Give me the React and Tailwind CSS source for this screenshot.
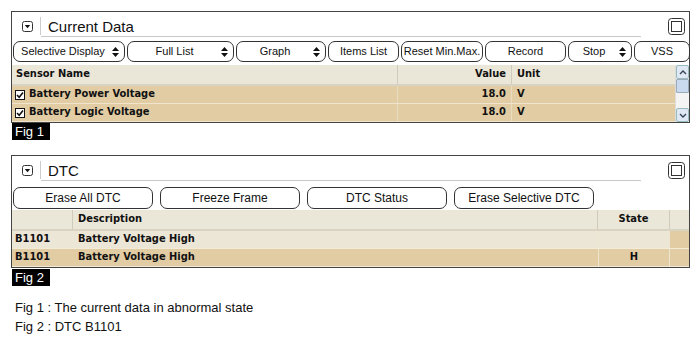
import React from 'react';

// Small widget icons drawn inline
const DropIcon = () => (
  <svg width="11" height="11" viewBox="0 0 11 11" className="shrink-0">
    <rect x="0.5" y="0.5" width="10" height="10" rx="2" fill="white" stroke="#333" />
    <path d="M2.8 4 L8.2 4 L5.5 7.2 Z" fill="#111" />
  </svg>
);

const RestoreIcon = () => (
  <svg width="17" height="17" viewBox="0 0 17 17">
    <rect x="0.5" y="0.5" width="16" height="16" rx="3" fill="white" stroke="#333" />
    <rect x="3.5" y="3.5" width="10" height="10" fill="white" stroke="#333" />
  </svg>
);

const Updown = () => (
  <svg width="7" height="10" viewBox="0 0 7 10" className="shrink-0">
    <path d="M3.5 0 L7 4 L0 4 Z M3.5 10 L7 6 L0 6 Z" fill="#111" />
  </svg>
);

const CheckBox = () => (
  <svg width="10" height="10" viewBox="0 0 10 10" className="shrink-0">
    <rect x="0.5" y="0.5" width="9" height="9" fill="white" stroke="#111" />
    <path d="M2 5 L4.2 7.2 L8 2.6" fill="none" stroke="#111" strokeWidth="1.6" />
  </svg>
);

const Btn = ({ label, w, h = 'h-[21px]', size = 'text-[11px]', arrow }) => (
  <div
    className={`${h} ${w} ${size} shrink-0 rounded-[7px] border border-[#333] bg-white flex items-center text-[#111]`}
  >
    <span className="flex-1 text-center">{label}</span>
    {arrow && <span className="mr-[5px] flex"><Updown /></span>}
  </div>
);

const PanelTitle = ({ title }) => (
  <div className="relative h-[28px] flex items-center">
    <div className="pl-[10px] pr-[7px] flex items-center h-full">
      <DropIcon />
    </div>
    <div className="w-px h-[18px] bg-[#ccc]" />
    <div className="pl-[7px] text-[15px] text-[#111] leading-none">{title}</div>
    <div className="absolute left-[29px] w-[600px] top-[24px] h-px bg-[#c8c8c8]" />
    <div className="ml-auto mr-[4px] flex items-center">
      <RestoreIcon />
    </div>
  </div>
);

const FigLabel = ({ text }) => (
  <div className="ml-[12px] w-[38px] h-[17px] bg-black text-white text-[13px] leading-none flex items-center pl-[3px]">
    {text}
  </div>
);

const ScrollBar = () => (
  <div className="w-[14px] border-l border-[#ddd] bg-[#f4f4f4] flex flex-col">
    <div className="h-[14px] bg-[#dfe8f5] border border-[#9bb] rounded-[2px] flex items-center justify-center">
      <svg width="8" height="5" viewBox="0 0 8 5"><path d="M1 4 L4 1 L7 4" fill="none" stroke="#345" strokeWidth="1.4" /></svg>
    </div>
    <div className="h-[14px] bg-[#c9d9ee] border border-[#9ab] rounded-[1px]" />
    <div className="flex-1" />
    <div className="h-[14px] bg-[#dfe8f5] border border-[#9bb] rounded-[2px] flex items-center justify-center">
      <svg width="8" height="5" viewBox="0 0 8 5"><path d="M1 1 L4 4 L7 1" fill="none" stroke="#345" strokeWidth="1.4" /></svg>
    </div>
  </div>
);

const sensors = [
  { name: 'Battery Power Voltage', value: '18.0', unit: 'V' },
  { name: 'Battery Logic Voltage', value: '18.0', unit: 'V' },
];

const dtcs = [
  { code: 'B1101', desc: 'Battery Voltage High', state: '', light: true },
  { code: 'B1101', desc: 'Battery Voltage High', state: 'H', light: false },
];

export default function App() {
  const bold = 'font-bold text-[11px] text-[#111]';
  return (
    <div className="w-[700px] h-[340px] bg-white pt-[11px] font-['Liberation_Sans',Arial,sans-serif]">
      {/* Fig 1 - current data */}
      <div className="ml-[11px] w-[679px] border border-[#444]">
        <PanelTitle title="Current Data" />
        <div className="flex gap-[2px] pl-[1px] pt-[1px]">
          <Btn label="Selective Display" w="w-[112px]" arrow />
          <Btn label="Full List" w="w-[107px]" arrow />
          <Btn label="Graph" w="w-[90px]" arrow />
          <Btn label="Items List" w="w-[71px]" />
          <Btn label="Reset Min.Max." w="w-[82px]" />
          <Btn label="Record" w="w-[81px]" />
          <Btn label="Stop" w="w-[64px]" arrow />
          <Btn label="VSS" w="w-[56px]" />
        </div>
        <div className="flex mt-[3px] font-['DejaVu_Sans_Condensed','DejaVu_Sans',sans-serif]">
          <div className="flex-1">
            <div className="flex h-[21px] bg-[#ebe7d8] border-b-2 border-[#d8d3c2] items-center">
              <div className={`w-[386px] pl-[4px] ${bold} border-r border-[#cfcab9] h-full flex items-center`}>Sensor Name</div>
              <div className={`w-[114px] pr-[5px] ${bold} border-r border-[#cfcab9] h-full flex items-center justify-end`}>Value</div>
              <div className={`pl-[5px] ${bold}`}>Unit</div>
            </div>
            {sensors.map((s, i) => (
              <div key={i} className="flex h-[18px] bg-[#e2cca4] border-b border-[#f0e4cc] items-center">
                <div className={`w-[386px] pl-[3px] flex items-center gap-[4px] ${bold} border-r border-[#eadcc0] h-full`}>
                  <CheckBox />
                  {s.name}
                </div>
                <div className={`w-[114px] pr-[5px] ${bold} border-r border-[#eadcc0] h-full flex items-center justify-end`}>{s.value}</div>
                <div className={`pl-[5px] ${bold}`}>{s.unit}</div>
              </div>
            ))}
          </div>
          <ScrollBar />
        </div>
      </div>
      <FigLabel text="Fig 1" />

      {/* Fig 2 - DTC */}
      <div className="ml-[11px] mt-[15px] w-[679px] border border-[#444]">
        <PanelTitle title="DTC" />
        <div className="flex gap-[7px] pl-[1px] pt-[3px]">
          <Btn label="Erase All DTC" w="w-[140px]" h="h-[22px]" size="text-[12px]" />
          <Btn label="Freeze Frame" w="w-[140px]" h="h-[22px]" size="text-[12px]" />
          <Btn label="DTC Status" w="w-[140px]" h="h-[22px]" size="text-[12px]" />
          <Btn label="Erase Selective DTC" w="w-[140px]" h="h-[22px]" size="text-[12px]" />
        </div>
        <div className="mt-[1px] font-['DejaVu_Sans_Condensed','DejaVu_Sans',sans-serif]">
          <div className="flex h-[21px] bg-[#ebe7d8] border-b-2 border-[#d8d3c2] items-center">
            <div className="w-[61px] border-r border-[#cfcab9] h-full" />
            <div className={`w-[525px] pl-[5px] ${bold} border-r border-[#cfcab9] h-full flex items-center`}>Description</div>
            <div className={`w-[72px] ${bold} border-r border-[#cfcab9] h-full flex items-center justify-center`}>State</div>
            <div className="flex-1" />
          </div>
          {dtcs.map((d, i) => (
            <div key={i} className={`flex h-[18px] ${d.light ? 'bg-[#ece6d6]' : 'bg-[#e2cca4]'} border-b border-[#f3ead8] items-center`}>
              <div className={`w-[61px] pl-[3px] ${bold} h-full flex items-center`}>{d.code}</div>
              <div className={`w-[525px] pl-[5px] ${bold} h-full flex items-center`}>{d.desc}</div>
              <div className={`w-[72px] ${bold} border-l border-r border-[#efe6d2] h-full flex items-center justify-center`}>{d.state}</div>
              <div className="flex-1 h-full bg-[#e2cca4]" />
            </div>
          ))}
        </div>
      </div>
      <div className="mt-[1px]">
        <FigLabel text="Fig 2" />
      </div>

      <div className="ml-[15px] mt-[12px] text-[13px] text-[#111] leading-[19px]">
        <div>Fig 1 : The current data in abnormal state</div>
        <div>Fig 2 : DTC B1101</div>
      </div>
    </div>
  );
}
